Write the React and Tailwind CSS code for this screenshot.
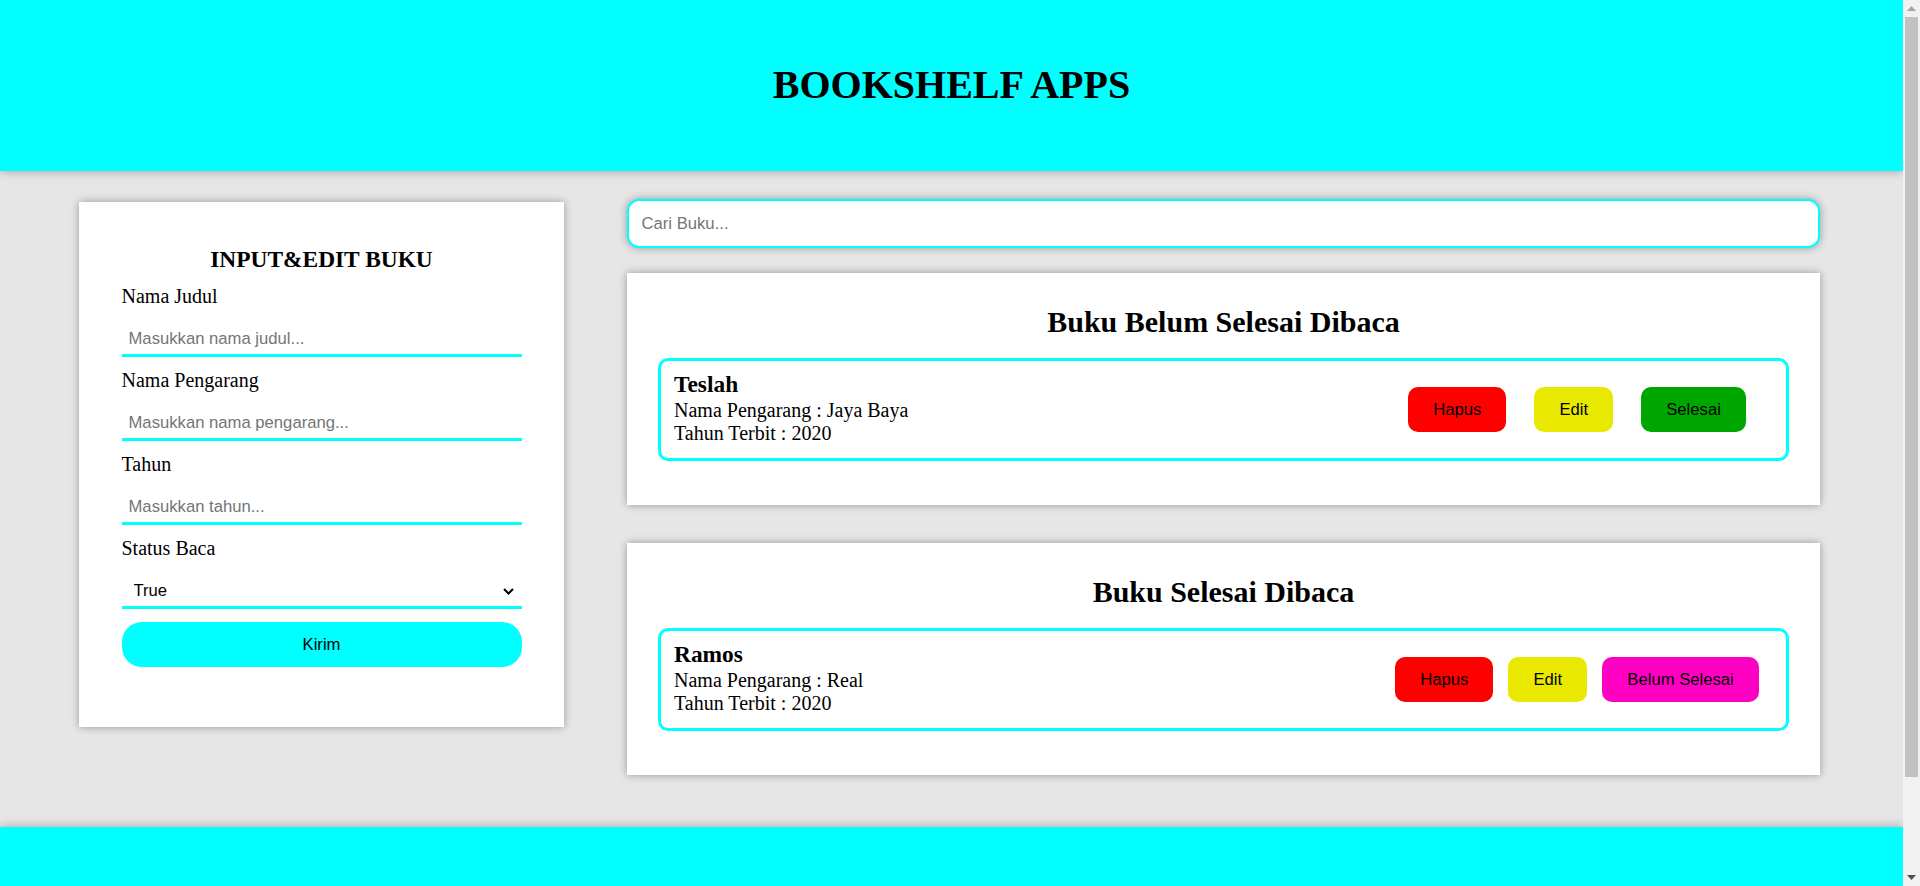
import { useState } from "react";

const books = {
  unread: [{ id: 1, title: "Teslah", author: "Jaya Baya", year: 2020 }],
  read: [{ id: 2, title: "Ramos", author: "Real", year: 2020 }],
};

function Field({ label, placeholder }) {
  return (
    <>
      <label className="block mt-[12px] text-[20px] leading-[23px]">{label}</label>
      <input
        type="text"
        placeholder={placeholder}
        className="block w-full h-[37px] mt-[12px] pt-[3px] px-[7px] border-b-[3px] border-[#00ffff] bg-white font-['Liberation_Sans',Arial,sans-serif] text-[16.67px] outline-none placeholder:text-[#757575]"
      />
    </>
  );
}

function BookItem({ book, done }) {
  return (
    <div className="flex items-center justify-between mt-[18.5px] h-[103px] border-[3px] border-[#00ffff] rounded-[10px] pl-[13px] pr-[12px]">
      <div className="self-start pt-[9px]">
        <h3 className="text-[23.4px] leading-[28.5px] font-bold">{book.title}</h3>
        <p className="text-[20px] leading-[23px]">Nama Pengarang : {book.author}</p>
        <p className="text-[20px] leading-[23px]">Tahun Terbit : {book.year}</p>
      </div>
      <div className="flex w-[394px] justify-evenly items-center font-['Liberation_Sans',Arial,sans-serif] text-[16.67px]">
        <button className="h-[45px] px-[25px] rounded-[10px] bg-[#ff0000]">Hapus</button>
        <button className="h-[45px] px-[25px] rounded-[10px] bg-[#e8e800]">Edit</button>
        {done ? (
          <button className="h-[45px] px-[25px] rounded-[10px] bg-[#ff00c3]">Belum Selesai</button>
        ) : (
          <button className="h-[45px] px-[25px] rounded-[10px] bg-[#00a600]">Selesai</button>
        )}
      </div>
    </div>
  );
}

function Shelf({ title, list, done, className }) {
  return (
    <section className={`bg-white shadow-[0_0_8px_rgba(0,0,0,0.35)] px-[31px] pt-[32px] pb-[44px] ${className}`}>
      <h2 className="text-center text-[30px] leading-[34.5px] font-bold">{title}</h2>
      {list.map((book) => (
        <BookItem key={book.id} book={book} done={done} />
      ))}
    </section>
  );
}

function ScrollBar() {
  return (
    <div className="fixed top-0 right-0 z-20 flex flex-col w-[17px] h-screen bg-[#f1f1f1]">
      <div className="flex items-center justify-center h-[17px]">
        <svg width="9" height="5" viewBox="0 0 9 5">
          <path d="M0 5h9L4.5 0z" fill="#a3a3a3" />
        </svg>
      </div>
      <div className="h-[760px] mx-[2px] bg-[#c1c1c1]" />
      <div className="flex-1" />
      <div className="flex items-center justify-center h-[17px]">
        <svg width="9" height="5" viewBox="0 0 9 5">
          <path d="M0 0h9L4.5 5z" fill="#505050" />
        </svg>
      </div>
    </div>
  );
}

export default function App() {
  const [status, setStatus] = useState("true");

  return (
    <div className="w-[1903px] min-h-screen bg-[#e6e6e6] text-black font-['Liberation_Serif','Times_New_Roman',serif]">
      <header className="relative z-10 h-[171px] pt-[62px] bg-[#00ffff] shadow-[0_0_10px_rgba(0,0,0,0.3)]">
        <h1 className="text-center text-[40px] leading-[46px] font-bold">BOOKSHELF APPS</h1>
      </header>

      <main className="flex items-start gap-[63px] pl-[79px] pr-[83px] pb-[52px]">
        {/* Form */}
        <section className="w-[485px] shrink-0 mt-[31px] bg-white shadow-[0_0_8px_rgba(0,0,0,0.35)] pt-[44px] pb-[60px]">
          <form className="w-[400px] mx-auto" onSubmit={(e) => e.preventDefault()}>
            <h3 className="text-center text-[23.4px] leading-[27px] font-bold">INPUT&amp;EDIT BUKU</h3>
            <Field label="Nama Judul" placeholder="Masukkan nama judul..." />
            <Field label="Nama Pengarang" placeholder="Masukkan nama pengarang..." />
            <Field label="Tahun" placeholder="Masukkan tahun..." />
            <label className="block mt-[12px] text-[20px] leading-[23px]">Status Baca</label>
            <div className="relative mt-[12px]">
              <select
                value={status}
                onChange={(e) => setStatus(e.target.value)}
                className="block w-full h-[37px] pt-[3px] pl-[12px] appearance-none border-b-[3px] border-[#00ffff] bg-white font-['Liberation_Sans',Arial,sans-serif] text-[16.67px] outline-none"
              >
                <option value="true">True</option>
                <option value="false">False</option>
              </select>
              <svg className="absolute right-[8px] top-[16px] w-[11px] h-[7px] pointer-events-none" viewBox="0 0 11 7" fill="none">
                <path d="M1 1l4.5 4.5L10 1" stroke="#000" strokeWidth="2" />
              </svg>
            </div>
            <button
              type="submit"
              className="block w-full h-[45px] mt-[13px] rounded-[20px] bg-[#00ffff] font-['Liberation_Sans',Arial,sans-serif] text-[16.67px]"
            >
              Kirim
            </button>
          </form>
        </section>

        {/* Shelves */}
        <div className="flex-1 mt-[28px]">
          <input
            type="text"
            placeholder="Cari Buku..."
            className="block w-full h-[49px] px-[12.5px] border-[2.5px] border-[#00ffff] rounded-[12px] bg-white shadow-[0_0_8px_rgba(0,0,0,0.35)] font-['Liberation_Sans',Arial,sans-serif] text-[16.67px] outline-none placeholder:text-[#757575]"
          />
          <Shelf title="Buku Belum Selesai Dibaca" list={books.unread} done={false} className="mt-[25px]" />
          <Shelf title="Buku Selesai Dibaca" list={books.read} done={true} className="mt-[38px]" />
        </div>
      </main>

      <footer className="h-[160px] bg-[#00ffff] shadow-[0_0_10px_rgba(0,0,0,0.3)]" />
      <ScrollBar />
    </div>
  );
}
